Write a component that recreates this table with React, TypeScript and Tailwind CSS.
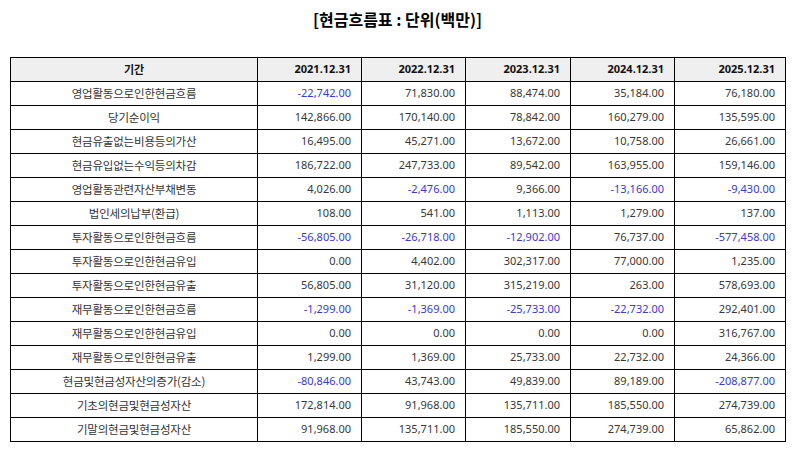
import React from 'react';

type Row = { label: string; values: string[] };

const years = ['2021.12.31', '2022.12.31', '2023.12.31', '2024.12.31', '2025.12.31'];

const rows: Row[] = [
  { label: '영업활동으로인한현금흐름', values: ['-22,742.00', '71,830.00', '88,474.00', '35,184.00', '76,180.00'] },
  { label: '당기순이익', values: ['142,866.00', '170,140.00', '78,842.00', '160,279.00', '135,595.00'] },
  { label: '현금유출없는비용등의가산', values: ['16,495.00', '45,271.00', '13,672.00', '10,758.00', '26,661.00'] },
  { label: '현금유입없는수익등의차감', values: ['186,722.00', '247,733.00', '89,542.00', '163,955.00', '159,146.00'] },
  { label: '영업활동관련자산부채변동', values: ['4,026.00', '-2,476.00', '9,366.00', '-13,166.00', '-9,430.00'] },
  { label: '법인세의납부(환급)', values: ['108.00', '541.00', '1,113.00', '1,279.00', '137.00'] },
  { label: '투자활동으로인한현금흐름', values: ['-56,805.00', '-26,718.00', '-12,902.00', '76,737.00', '-577,458.00'] },
  { label: '투자활동으로인한현금유입', values: ['0.00', '4,402.00', '302,317.00', '77,000.00', '1,235.00'] },
  { label: '투자활동으로인한현금유출', values: ['56,805.00', '31,120.00', '315,219.00', '263.00', '578,693.00'] },
  { label: '재무활동으로인한현금흐름', values: ['-1,299.00', '-1,369.00', '-25,733.00', '-22,732.00', '292,401.00'] },
  { label: '재무활동으로인한현금유입', values: ['0.00', '0.00', '0.00', '0.00', '316,767.00'] },
  { label: '재무활동으로인한현금유출', values: ['1,299.00', '1,369.00', '25,733.00', '22,732.00', '24,366.00'] },
  { label: '현금및현금성자산의증가(감소)', values: ['-80,846.00', '43,743.00', '49,839.00', '89,189.00', '-208,877.00'] },
  { label: '기초의현금및현금성자산', values: ['172,814.00', '91,968.00', '135,711.00', '185,550.00', '274,739.00'] },
  { label: '기말의현금및현금성자산', values: ['91,968.00', '135,711.00', '185,550.00', '274,739.00', '65,862.00'] },
];

// 음수는 파란색으로
const numClass = (v: string) => (v.startsWith('-') ? 'text-[#3a3ad0]' : 'text-[#383838]');

export default function App() {
  return (
    <div className="min-h-[452px] w-[795px] bg-white px-[10px] font-['Noto_Sans','Noto_Sans_CJK_KR',sans-serif]">
      <h1 className="flex h-[38px] items-center justify-center text-[16px] font-bold text-black font-['Noto_Sans_CJK_KR',sans-serif]">
        [현금흐름표 : 단위(백만)]
      </h1>

      <table className="mt-[19px] w-[775px] table-fixed border-collapse border border-black">
        <colgroup>
          <col className="w-[247px]" />
          <col className="w-[104px]" />
          <col className="w-[104px]" />
          <col className="w-[105px]" />
          <col className="w-[104px]" />
          <col className="w-[111px]" />
        </colgroup>
        <thead>
          <tr className="h-[24px] bg-[#efefef]">
            <th className="border border-black text-center text-[11px] font-bold text-[#111] font-['Noto_Sans_CJK_KR',sans-serif]">
              기간
            </th>
            {years.map((y) => (
              <th
                key={y}
                className="border border-black pr-[10px] text-right text-[11px] font-bold text-[#111]"
              >
                {y}
              </th>
            ))}
          </tr>
        </thead>
        <tbody>
          {rows.map((r) => (
            <tr key={r.label} className="h-[24px]">
              <td className="border border-black text-center text-[11.5px] tracking-[-0.2px] text-[#333] font-['Noto_Sans_CJK_KR',sans-serif]">
                {r.label}
              </td>
              {r.values.map((v, i) => (
                <td
                  key={i}
                  className={`border border-black pr-[10px] text-right text-[11px] ${numClass(v)}`}
                >
                  {v}
                </td>
              ))}
            </tr>
          ))}
        </tbody>
      </table>
    </div>
  );
}
